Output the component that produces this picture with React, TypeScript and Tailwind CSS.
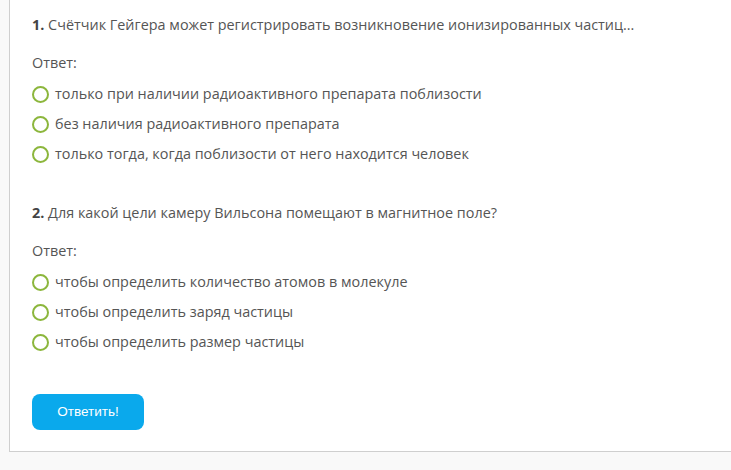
import React from 'react';

const questions = [
  {
    num: '1.',
    text: 'Счётчик Гейгера может регистрировать возникновение ионизированных частиц...',
    options: [
      'только при наличии радиоактивного препарата поблизости',
      'без наличия радиоактивного препарата',
      'только тогда, когда поблизости от него находится человек',
    ],
  },
  {
    num: '2.',
    text: 'Для какой цели камеру Вильсона помещают в магнитное поле?',
    options: [
      'чтобы определить количество атомов в молекуле',
      'чтобы определить заряд частицы',
      'чтобы определить размер частицы',
    ],
  },
];

const Radio = () => (
  <span className="inline-block h-[17px] w-[17px] shrink-0 rounded-full border-2 border-[#8cb63c] bg-white" />
);

export default function App() {
  return (
    <div
      className="min-h-[470px] w-full bg-[#f9f9f9] text-[14.4px] text-[#555]"
      style={{ fontFamily: '"Open Sans", sans-serif' }}
    >
      <div className="ml-[9px] border-b border-l border-[#cfcfcf] bg-white pl-[22px] pt-[15px] pb-[21px]">
        {questions.map((q, i) => (
          <div key={q.num} className={i > 0 ? 'mt-[34px]' : ''}>
            <div className="h-5 leading-5">
              <span className="font-bold text-[#444]">{q.num}</span> {q.text}
            </div>
            <div className="mt-[18px] h-5 leading-5">Ответ:</div>
            <div className="mt-[6px]">
              {q.options.map((o) => (
                <label key={o} className="flex h-[30px] items-center gap-[6px] leading-5">
                  <Radio />
                  <span>{o}</span>
                </label>
              ))}
            </div>
          </div>
        ))}
        <button
          className="mt-[37px] h-9 w-[112px] rounded-lg bg-[#0aa9ec] text-[13.5px] text-white"
          style={{ fontFamily: '"Liberation Sans", Arial, sans-serif' }}
        >
          Ответить!
        </button>
      </div>
    </div>
  );
}
